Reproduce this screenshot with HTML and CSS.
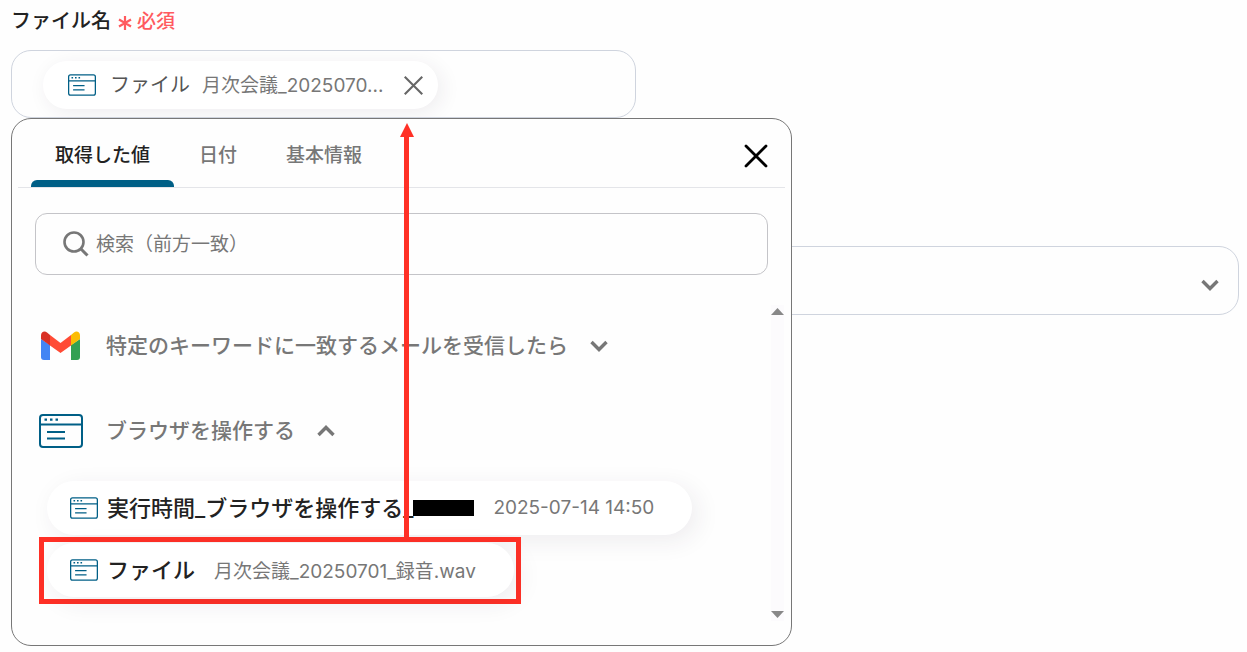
FILE: index.html
```html
<!DOCTYPE html>
<html lang="ja">

<head>
    <meta charset="UTF-8">
    <meta name="viewport" content="width=device-width, initial-scale=1.0">
    <title>ファイル名</title>
    <link rel="stylesheet" href="styles.css">
</head>

<body>
    <!-- Shared icons -->
    <svg class="icon-defs" aria-hidden="true">
        <symbol id="icon-browser" viewBox="0 0 44 34">
            <rect x="1" y="1" width="42" height="32" rx="3" fill="none" stroke="currentColor" stroke-width="2"/>
            <path d="M1 10.500H43M8 18H26M8 24.500H26" fill="none" stroke="currentColor" stroke-width="2"/>
            <path d="M5.500 5.700h2.500M11 5.700h2.500M16.500 5.700h2.500" fill="none" stroke="currentColor" stroke-width="2.200"/>
        </symbol>
        <symbol id="icon-close" viewBox="0 0 24 24">
            <path d="M2 2L22 22M22 2L2 22" fill="none" stroke="currentColor" stroke-width="2.800" stroke-linecap="round"/>
        </symbol>
        <symbol id="icon-chevron" viewBox="0 0 18 12">
            <path d="M1.500 2L9 9.500L16.500 2" fill="none" stroke="currentColor" stroke-width="3.400"/>
        </symbol>
    </svg>

    <main>
        <div class="label-row">
            <label class="label" for="fileName">ファイル名</label>
            <span class="required">
                <svg class="asterisk" viewBox="0 0 14 16" aria-hidden="true">
                    <path d="M7 1V15M1 4.500L13 11.500M13 4.500L1 11.500" fill="none" stroke="currentColor" stroke-width="2.200"/>
                </svg>
                必須
            </span>
        </div>

        <div class="field-wrap">
            <div class="field">
                <div class="chip">
                    <svg class="icon-small" aria-hidden="true"><use href="#icon-browser"/></svg>
                    <span class="chip-name">ファイル</span>
                    <span class="chip-value">月次会議_2025070...</span>
                    <button type="button" class="chip-remove" aria-label="削除">
                        <svg viewBox="0 0 24 24"><path d="M2 2L22 22M22 2L2 22" fill="none" stroke="currentColor" stroke-width="2.400"/></svg>
                    </button>
                </div>
                <input type="text" id="fileName" class="field-input">
            </div>

            <div class="popup">
                <div class="tabs">
                    <button type="button" class="tab active">取得した値</button>
                    <button type="button" class="tab">日付</button>
                    <button type="button" class="tab">基本情報</button>
                    <button type="button" class="popup-close" aria-label="閉じる">
                        <svg><use href="#icon-close"/></svg>
                    </button>
                </div>

                <div class="search">
                    <svg class="search-icon" viewBox="0 0 26 26" aria-hidden="true">
                        <circle cx="11" cy="11" r="9.500" fill="none" stroke="currentColor" stroke-width="2.600"/>
                        <path d="M18 18L24.500 24.500" stroke="currentColor" stroke-width="3"/>
                    </svg>
                    <input type="text" class="search-input" placeholder="検索（前方一致）" aria-label="検索（前方一致）">
                </div>

                <div class="list-area">
                    <div class="list">
                        <button type="button" class="group">
                            <svg class="group-icon" viewBox="0 0 44 34" aria-hidden="true">
                                <path fill="#4285f4" d="M2 10L11 16V31H5Q2 31 2 28Z"/>
                                <path fill="#34a053" d="M32 16L41 10V28Q41 31 38 31H32Z"/>
                                <path fill="#fbbc04" d="M32 6L35 3.500C37.500 1.500 41 3 41 6.500V10L32 16.500Z"/>
                                <path fill="#ff4b35" d="M11 6L21.500 14L32 6V16.500L21.500 24L11 16.500Z"/>
                                <path fill="#d93025" d="M2 6.500C2 3 5.500 1.500 8 3.500L11 6V16.500L2 10Z"/>
                            </svg>
                            <span class="group-name">特定のキーワードに一致するメールを受信したら</span>
                            <svg class="chevron"><use href="#icon-chevron"/></svg>
                        </button>
                        <button type="button" class="group">
                            <svg class="group-icon" aria-hidden="true"><use href="#icon-browser"/></svg>
                            <span class="group-name">ブラウザを操作する</span>
                            <svg class="chevron up"><use href="#icon-chevron"/></svg>
                        </button>
                        <div class="items">
                            <button type="button" class="item">
                                <svg class="icon-small" aria-hidden="true"><use href="#icon-browser"/></svg>
                                <span class="item-name">実行時間_ブラウザを操作する_</span>
                                <span class="masked"></span>
                                <span class="item-value">2025-07-14 14:50</span>
                            </button>
                            <div class="highlight">
                                <button type="button" class="item">
                                    <svg class="icon-small" aria-hidden="true"><use href="#icon-browser"/></svg>
                                    <span class="item-name">ファイル</span>
                                    <span class="item-value">月次会議_20250701_録音.wav</span>
                                </button>
                            </div>
                        </div>
                    </div>
                    <div class="scrollbar" aria-hidden="true">
                        <svg viewBox="0 0 13 7"><path d="M0 7L6.500 0L13 7Z" fill="currentColor"/></svg>
                        <svg viewBox="0 0 13 7"><path d="M0 0L6.500 7L13 0Z" fill="currentColor"/></svg>
                    </div>
                </div>

                <div class="arrow"></div>
            </div>
        </div>

        <div class="select-wrap">
            <select class="select" aria-label="選択">
                <option></option>
            </select>
            <svg class="chevron" aria-hidden="true"><use href="#icon-chevron"/></svg>
        </div>
    </main>
</body>

</html>
```
FILE: styles.css
```css
* {
    margin: 0;
    padding: 0;
    box-sizing: border-box;
}

body {
    min-height: 100vh;
    font-family: Inter, 'Noto Sans CJK JP', sans-serif;
    background-color: #fefefe;
    color: #222;
    padding: 0 8px 0 11px;
}

button, input, select {
    font: inherit;
    color: inherit;
    background: none;
    border: none;
    outline: none;
}

button {
    display: flex;
    align-items: center;
    cursor: pointer;
    white-space: nowrap;
}

svg {
    display: block;
    flex-shrink: 0;
}

.icon-defs {
    position: absolute;
    width: 0;
    height: 0;
}

/* Label */
.label-row {
    display: flex;
    align-items: center;
    gap: 7px;
    height: 50px;
    padding-bottom: 11px;
}

.label {
    font-size: 20px;
    font-weight: 500;
}

.required {
    display: flex;
    align-items: center;
    gap: 5px;
    font-size: 19px;
    font-weight: 500;
    color: #ff5a5f;
}

.asterisk {
    width: 14px;
    height: 16px;
    margin-top: 6px;
}

/* File name field */
.field-wrap {
    position: relative;
    width: calc(51% - 1px);
}

.field {
    display: flex;
    align-items: center;
    height: 68px;
    padding: 2px 0 0 31px;
    border: 1px solid #cfd4de;
    border-radius: 20px;
    overflow: hidden;
}

.field-input {
    flex: 1;
    min-width: 0;
    height: 100%;
}

.chip {
    display: flex;
    align-items: center;
    height: 48px;
    padding: 0 14px 0 25px;
    border-radius: 24px;
    background-color: #fff;
    box-shadow: 4px 4px 20px rgba(50, 40, 70, 0.08);
    white-space: nowrap;
}

.icon-small {
    width: 28px;
    height: 22px;
    color: #005f86;
}

.chip-name {
    margin-left: 14px;
    padding-bottom: 3px;
    font-size: 20px;
    color: #555;
}

.chip-value {
    margin-left: 12px;
    padding-bottom: 4px;
    font-size: 19px;
    color: #777;
}

.chip-remove {
    margin-left: 20px;
    color: #666;
}

.chip-remove svg {
    width: 21px;
    height: 21px;
}

/* Popup */
.popup {
    position: absolute;
    top: 100%;
    left: 0;
    width: calc(125% - 1px);
    padding-bottom: 41px;
    border: 1px solid #777;
    border-radius: 20px;
    background-color: #fefefe;
}

.tabs {
    display: flex;
    gap: 1px;
    height: 69px;
    margin: 0 6px;
    padding-left: 13px;
    border-bottom: 1px solid #e4e5e9;
}

.tab {
    position: relative;
    padding: 0 24px;
    font-size: 19px;
    font-weight: 500;
    color: #777;
}

.tab.active {
    color: #222;
}

.tab.active::after {
    content: '';
    position: absolute;
    left: 0;
    right: 0;
    bottom: 0;
    height: 7px;
    border-radius: 6px 6px 0 0;
    background-color: #005f86;
}

.popup-close {
    margin-left: auto;
    padding: 6px 17px 0 0;
    color: #000;
}

.popup-close svg {
    width: 24px;
    height: 24px;
}

.search {
    display: flex;
    align-items: center;
    gap: 7px;
    height: 62px;
    margin: 25px 23px 0;
    padding: 0 27px;
    border: 1px solid #c4c4c8;
    border-radius: 12px;
}

.search-icon {
    width: 26px;
    height: 26px;
    color: #777;
}

.search-input {
    flex: 1;
    min-width: 0;
    font-size: 19px;
}

.search-input::placeholder {
    color: #777;
    opacity: 1;
}

/* List of values */
.list-area {
    display: flex;
    margin-top: 28px;
}

.list {
    flex: 1;
    min-width: 0;
}

.group {
    width: 100%;
    height: 85px;
    padding-left: 27px;
    font-size: 21px;
    font-weight: 500;
    color: #777;
}

.group-icon {
    width: 44px;
    height: 34px;
    margin-right: 23px;
    color: #005f86;
}

.group-name {
    padding-bottom: 4px;
}

.chevron {
    width: 18px;
    height: 12px;
    color: #777;
}

.group .chevron {
    margin-left: 22px;
}

.chevron.up {
    transform: rotate(180deg);
}

.items {
    display: flex;
    flex-direction: column;
    align-items: flex-start;
    padding: 8px 0 0 35px;
}

.item {
    height: 54px;
    padding: 0 38px 0 23px;
    border-radius: 27px;
    background-color: #fff;
    box-shadow: 6px 6px 24px rgba(50, 40, 70, 0.08);
}

.item-name {
    margin-left: 9px;
    padding-bottom: 4px;
    font-size: 22px;
    font-weight: 500;
}

.item-value {
    margin-left: 19px;
    padding-bottom: 2px;
    font-size: 19px;
    color: #777;
}

.masked {
    width: 61px;
    height: 16px;
    background-color: #000;
}

.highlight {
    margin: 2px 0 0 -8px;
    padding: 1px 2px 2px 3px;
    border: 5px solid #ff3026;
}

.scrollbar {
    display: flex;
    flex-direction: column;
    justify-content: space-between;
    margin: 2px 7px -17px 0;
    padding: 3px 0;
    background-color: #fcfbfd;
    color: #888;
}

.scrollbar svg {
    width: 13px;
    height: 7px;
}

/* Arrow from the highlighted value to the field */
.arrow {
    position: absolute;
    top: 4px;
    bottom: 108px;
    left: 392px;
    width: 5px;
    background-color: #ff3026;
    background-clip: content-box;
    padding-top: 12px;
}

.arrow::before {
    content: '';
    position: absolute;
    top: 0;
    left: -4px;
    border: solid transparent;
    border-width: 0 7px 14px;
    border-bottom-color: #ff3026;
}

/* Select below the popup */
.select-wrap {
    display: flex;
    align-items: center;
    height: 69px;
    margin-top: 128px;
    padding-right: 19px;
    border: 1px solid #cfd4de;
    border-radius: 20px;
}

.select {
    flex: 1;
    height: 100%;
    appearance: none;
}

.select-wrap .chevron {
    margin-top: 8px;
}
```
